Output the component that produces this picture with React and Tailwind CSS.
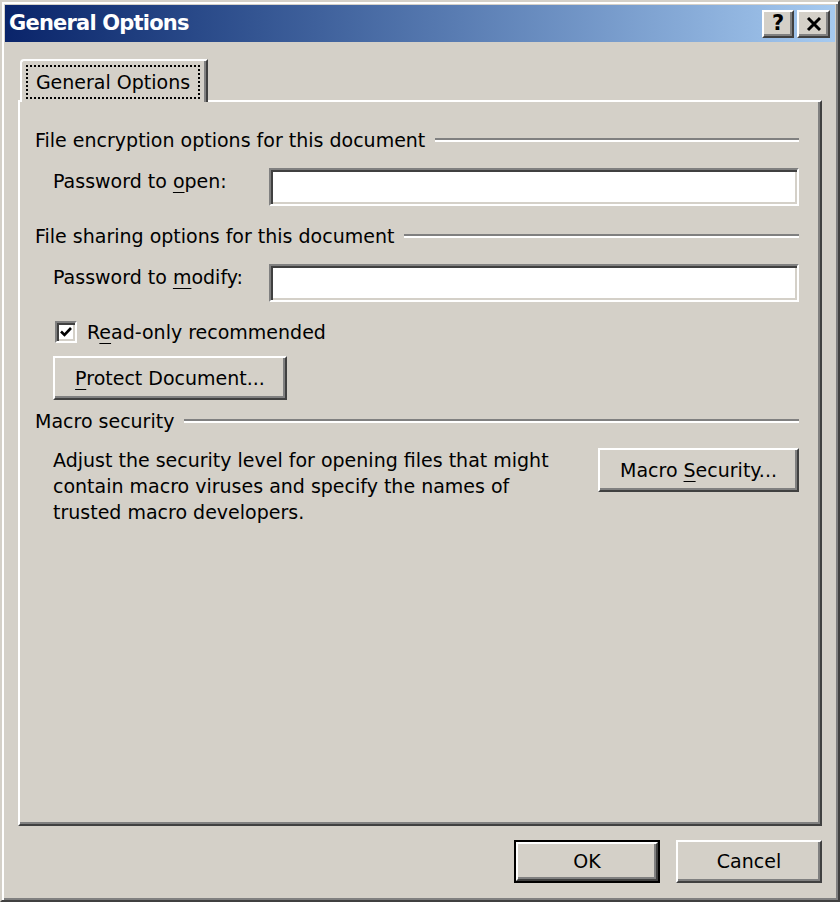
const face = { fontFamily: '"DejaVu Sans", Verdana, sans-serif' };

function Raised({ className = "", children }) {
  return (
    <div
      className={
        "flex items-center justify-center bg-[#d4d0c8] border-2 border-t-white border-l-white border-b-[#404040] border-r-[#404040] shadow-[inset_-2px_-2px_0_#808080] " +
        className
      }
    >
      {children}
    </div>
  );
}

function Field() {
  return (
    <div className="h-[38px] flex-1 bg-white border-2 border-t-[#808080] border-l-[#808080] border-b-white border-r-white shadow-[inset_2px_2px_0_#404040,inset_-2px_-2px_0_#d4d0c8]" />
  );
}

function Heading({ children }) {
  return (
    <div className="flex items-center h-[26px]">
      <span className="whitespace-nowrap">{children}</span>
      <div className="ml-[10px] flex-1 h-[4px] border-t-2 border-t-[#808080] border-b-2 border-b-white" />
    </div>
  );
}

export default function App() {
  return (
    <div
      style={face}
      className="w-[840px] h-[902px] flex flex-col bg-[#d4d0c8] text-black text-[19px] border-2 border-t-[#d4d0c8] border-l-[#d4d0c8] border-b-[#404040] border-r-[#404040] p-[3px] shadow-[inset_2px_2px_0_#fff,inset_-2px_-2px_0_#808080]"
    >
      {/* title bar */}
      <div className="h-[37px] flex items-center pl-[4px] pr-[5px] bg-gradient-to-r from-[#0a246a] to-[#a6caf0]">
        <span className="flex-1 text-white font-bold text-[21px] tracking-[-0.8px]">General Options</span>
        <Raised className="w-[32px] h-[28px] font-bold text-[21px] leading-none">?</Raised>
        <Raised className="ml-[3px] w-[33px] h-[28px]">
          <svg width="18" height="16" viewBox="0 0 18 16">
            <path d="M3 2 L15 14 M15 2 L3 14" stroke="#000" strokeWidth="3" fill="none" />
          </svg>
        </Raised>
      </div>

      <div className="flex-1 flex flex-col px-[13px] pt-[17px] pb-[14px]">
        {/* tab */}
        <div className="relative z-10 -mb-[2px] ml-[2px] w-[188px] h-[43px] bg-[#d4d0c8] border-t-2 border-l-2 border-r-2 border-t-white border-l-white border-r-[#404040] rounded-tl-[4px] shadow-[inset_-2px_0_0_#808080] pt-[4px] pl-[4px]">
          <div className="w-[174px] h-[34px] flex items-center justify-center border-2 border-dotted border-black">
            General Options
          </div>
        </div>

        {/* panel */}
        <div className="h-[726px] flex flex-col border-2 border-t-white border-l-white border-b-[#404040] border-r-[#404040] shadow-[inset_-2px_-2px_0_#808080] pl-[15px] pr-[21px] pt-[25px]">
          <Heading>File encryption options for this document</Heading>
          <div className="mt-[15px] flex items-center pl-[18px]">
            <span className="w-[216px] -mt-[12px]">
              Password to <span className="underline underline-offset-4">o</span>pen:
            </span>
            <Field />
          </div>

          <div className="mt-[17px]">
            <Heading>File sharing options for this document</Heading>
          </div>
          <div className="mt-[15px] flex items-center pl-[18px]">
            <span className="w-[216px] -mt-[12px]">
              Password to <span className="underline underline-offset-4">m</span>odify:
            </span>
            <Field />
          </div>

          <div className="mt-[19px] flex items-center pl-[20px] h-[22px]">
            <div className="w-[22px] h-[22px] flex items-center justify-center bg-white border-2 border-t-[#808080] border-l-[#808080] border-b-white border-r-white shadow-[inset_2px_2px_0_#404040,inset_-2px_-2px_0_#d4d0c8]">
              <svg width="14" height="14" viewBox="0 0 14 14">
                <path d="M2 6.5 L5.5 10 L12 3" stroke="#000" strokeWidth="2.6" fill="none" />
              </svg>
            </div>
            <span className="ml-[10px]">
              R<span className="underline underline-offset-4">e</span>ad-only recommended
            </span>
          </div>

          <div className="mt-[13px] pl-[18px]">
            <Raised className="w-[234px] h-[44px]">
              <span>
                <span className="underline underline-offset-4">P</span>rotect Document...
              </span>
            </Raised>
          </div>

          <div className="mt-[8px]">
            <Heading>Macro security</Heading>
          </div>

          <div className="mt-[14px] flex items-start justify-between pl-[18px]">
            <p className="w-[528px] leading-[26px] -mt-[1px]">
              Adjust the security level for opening files that might contain macro viruses and specify the names of trusted macro developers.
            </p>
            <Raised className="w-[201px] h-[44px]">
              <span>
                Macro <span className="underline underline-offset-4">S</span>ecurity...
              </span>
            </Raised>
          </div>
        </div>

        {/* buttons */}
        <div className="mt-[14px] flex justify-end gap-[16px]">
          <div className="border-2 border-black">
            <Raised className="w-[142px] h-[39px]">OK</Raised>
          </div>
          <Raised className="w-[146px] h-[43px]">Cancel</Raised>
        </div>
      </div>
    </div>
  );
}
